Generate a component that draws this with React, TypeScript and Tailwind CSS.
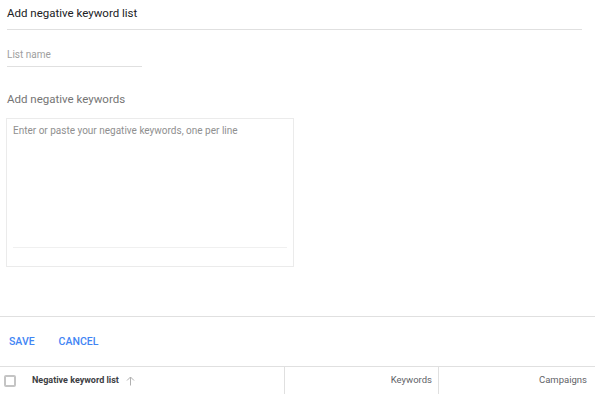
import React from "react";

export default function App() {
  return (
    <div className="w-[595px] h-[394px] overflow-hidden bg-white flex flex-col" style={{ fontFamily: "Roboto, 'Liberation Sans', sans-serif" }}>
      <div className="pl-[7px] pr-[13px]">
        <div className="h-[30px] pt-[6px] border-b border-[#e0e0e0] text-[11.5px] leading-[14px] text-[#202124]">
          Add negative keyword list
        </div>
        <div className="mt-[18px] w-[135px] h-[19px] pt-px border-b border-[#e0e0e0] text-[10px] leading-[12px] text-[#9e9e9e]">
          List name
        </div>
        <div className="mt-[25px] text-[11.5px] leading-[14px] text-[#757575]">
          Add negative keywords
        </div>
        <div className="mt-[12px] -ml-px w-[288px] h-[149px] border border-[#ebebeb] px-[6px] pt-[6px] flex flex-col">
          <div className="text-[10px] leading-[12px] text-[#8f8f8f]">
            Enter or paste your negative keywords, one per line
          </div>
          <div className="mt-auto mb-[18px] border-b border-[#f0f0f0]" />
        </div>
      </div>
      <div className="mt-[49px] border-t border-[#e0e0e0] h-[50px] flex items-start pt-[18px] pl-[9px] gap-[24px] text-[10.5px] leading-[13px] font-medium text-[#4285f4]">
        <span>SAVE</span>
        <span>CANCEL</span>
      </div>
      <div className="border-t border-[#e0e0e0] flex-1 flex text-[9px] text-[#5f6368]">
        <div className="w-[285px] border-r border-[#e0e0e0] flex items-center pl-[4px]">
          <div className="w-[12px] h-[12px] border-2 border-[#c4c4c4] rounded-[2px]" />
          <span className="ml-[16px] font-bold text-[#3c4043]">Negative keyword list</span>
          <svg className="ml-[7px]" width="9" height="10" viewBox="0 0 9 10" fill="none" stroke="#b0b0b0" strokeWidth="1">
            <path d="M4.5 9.5V1M1 4.5L4.5 1L8 4.5" />
          </svg>
        </div>
        <div className="w-[154px] border-r border-[#e0e0e0] flex items-center justify-end pr-[6px] text-[9.5px]">
          Keywords
        </div>
        <div className="flex-1 flex items-center justify-end pr-[8px] text-[9.5px]">
          Campaigns
        </div>
      </div>
    </div>
  );
}
